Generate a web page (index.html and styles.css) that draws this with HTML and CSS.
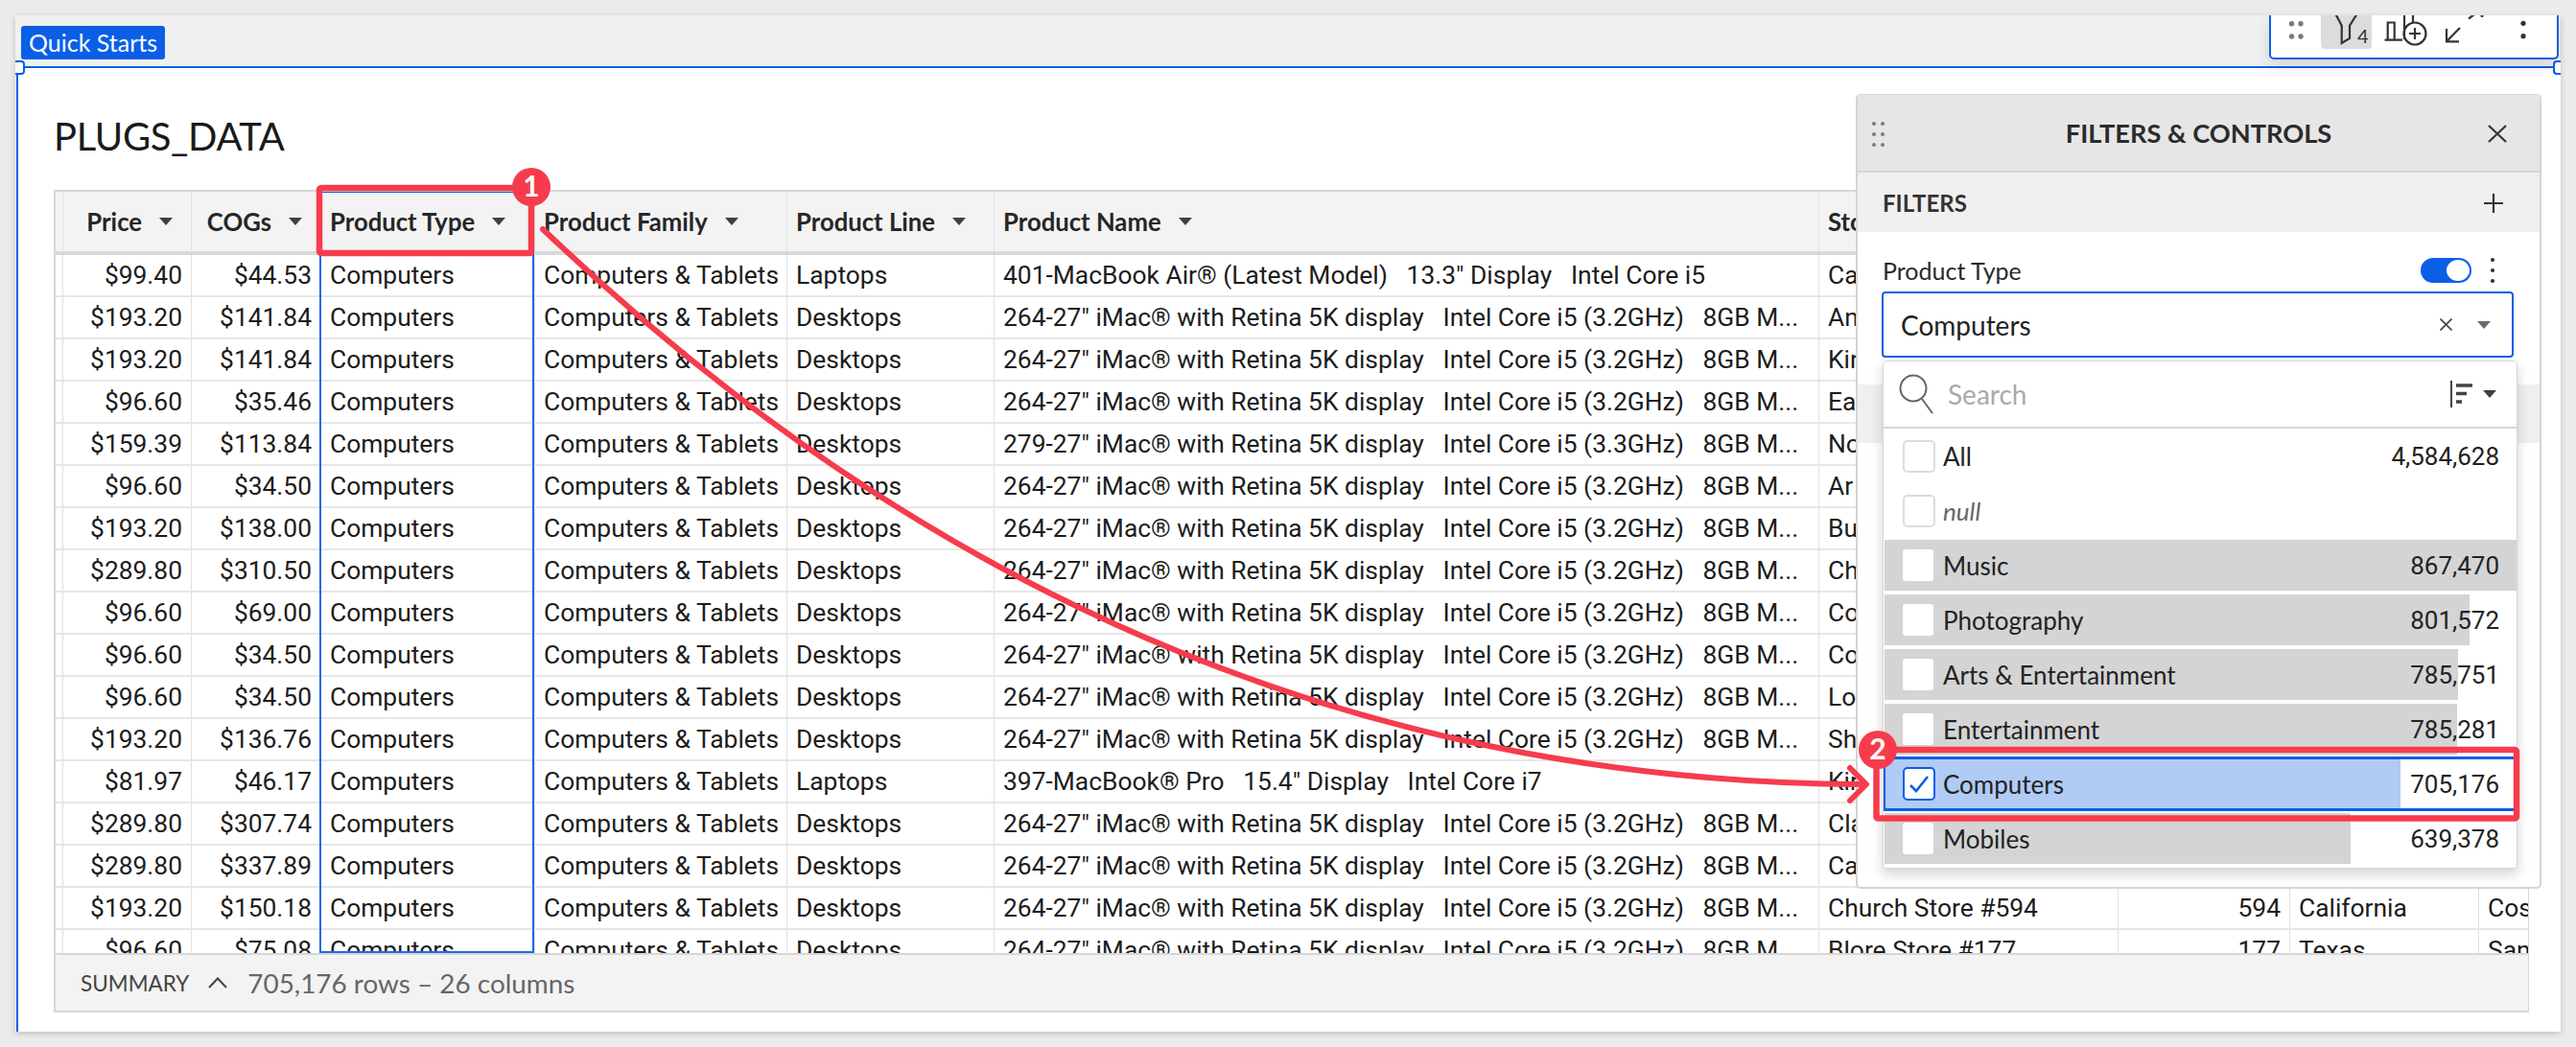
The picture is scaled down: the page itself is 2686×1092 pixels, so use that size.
FILE: index.html
```html
<!DOCTYPE html>
<html lang="en">
<head>
<meta charset="utf-8">
<title>PLUGS_DATA</title>
<link rel="stylesheet" href="styles.css">
</head>
<body>
<div class="sheet">
  <div class="topbar"><button class="qs">Quick Starts</button></div>
  <main class="element">
    <h1 class="title">PLUGS_DATA</h1>
    <section class="table">
      <div class="grid">
        <div class="row head">
          <div class="c"></div>
          <div class="c r">Price<i class="caret"></i></div>
          <div class="c r">COGs<i class="caret"></i></div>
          <div class="c">Product Type<i class="caret"></i></div>
          <div class="c">Product Family<i class="caret"></i></div>
          <div class="c">Product Line<i class="caret"></i></div>
          <div class="c">Product Name<i class="caret"></i></div>
          <div class="c">Store Name</div><div class="c"></div><div class="c"></div><div class="c"></div>
        </div>
        <div class="row"><div class="c"></div><div class="c r">$99.40</div><div class="c r">$44.53</div><div class="c">Computers</div><div class="c">Computers &amp; Tablets</div><div class="c">Laptops</div><div class="c">401-MacBook Air® (Latest Model)   13.3" Display   Intel Core i5</div><div class="c">Car</div><div class="c"></div><div class="c"></div><div class="c"></div></div>
        <div class="row"><div class="c"></div><div class="c r">$193.20</div><div class="c r">$141.84</div><div class="c">Computers</div><div class="c">Computers &amp; Tablets</div><div class="c">Desktops</div><div class="c">264-27" iMac® with Retina 5K display   Intel Core i5 (3.2GHz)   8GB M...</div><div class="c">And</div><div class="c"></div><div class="c"></div><div class="c"></div></div>
        <div class="row"><div class="c"></div><div class="c r">$193.20</div><div class="c r">$141.84</div><div class="c">Computers</div><div class="c">Computers &amp; Tablets</div><div class="c">Desktops</div><div class="c">264-27" iMac® with Retina 5K display   Intel Core i5 (3.2GHz)   8GB M...</div><div class="c">Kir</div><div class="c"></div><div class="c"></div><div class="c"></div></div>
        <div class="row"><div class="c"></div><div class="c r">$96.60</div><div class="c r">$35.46</div><div class="c">Computers</div><div class="c">Computers &amp; Tablets</div><div class="c">Desktops</div><div class="c">264-27" iMac® with Retina 5K display   Intel Core i5 (3.2GHz)   8GB M...</div><div class="c">Ear</div><div class="c"></div><div class="c"></div><div class="c"></div></div>
        <div class="row"><div class="c"></div><div class="c r">$159.39</div><div class="c r">$113.84</div><div class="c">Computers</div><div class="c">Computers &amp; Tablets</div><div class="c">Desktops</div><div class="c">279-27" iMac® with Retina 5K display   Intel Core i5 (3.3GHz)   8GB M...</div><div class="c">Nor</div><div class="c"></div><div class="c"></div><div class="c"></div></div>
        <div class="row"><div class="c"></div><div class="c r">$96.60</div><div class="c r">$34.50</div><div class="c">Computers</div><div class="c">Computers &amp; Tablets</div><div class="c">Desktops</div><div class="c">264-27" iMac® with Retina 5K display   Intel Core i5 (3.2GHz)   8GB M...</div><div class="c">Ar</div><div class="c"></div><div class="c"></div><div class="c"></div></div>
        <div class="row"><div class="c"></div><div class="c r">$193.20</div><div class="c r">$138.00</div><div class="c">Computers</div><div class="c">Computers &amp; Tablets</div><div class="c">Desktops</div><div class="c">264-27" iMac® with Retina 5K display   Intel Core i5 (3.2GHz)   8GB M...</div><div class="c">Bu</div><div class="c"></div><div class="c"></div><div class="c"></div></div>
        <div class="row"><div class="c"></div><div class="c r">$289.80</div><div class="c r">$310.50</div><div class="c">Computers</div><div class="c">Computers &amp; Tablets</div><div class="c">Desktops</div><div class="c">264-27" iMac® with Retina 5K display   Intel Core i5 (3.2GHz)   8GB M...</div><div class="c">Ch</div><div class="c"></div><div class="c"></div><div class="c"></div></div>
        <div class="row"><div class="c"></div><div class="c r">$96.60</div><div class="c r">$69.00</div><div class="c">Computers</div><div class="c">Computers &amp; Tablets</div><div class="c">Desktops</div><div class="c">264-27" iMac® with Retina 5K display   Intel Core i5 (3.2GHz)   8GB M...</div><div class="c">Co</div><div class="c"></div><div class="c"></div><div class="c"></div></div>
        <div class="row"><div class="c"></div><div class="c r">$96.60</div><div class="c r">$34.50</div><div class="c">Computers</div><div class="c">Computers &amp; Tablets</div><div class="c">Desktops</div><div class="c">264-27" iMac® with Retina 5K display   Intel Core i5 (3.2GHz)   8GB M...</div><div class="c">Co</div><div class="c"></div><div class="c"></div><div class="c"></div></div>
        <div class="row"><div class="c"></div><div class="c r">$96.60</div><div class="c r">$34.50</div><div class="c">Computers</div><div class="c">Computers &amp; Tablets</div><div class="c">Desktops</div><div class="c">264-27" iMac® with Retina 5K display   Intel Core i5 (3.2GHz)   8GB M...</div><div class="c">Lo</div><div class="c"></div><div class="c"></div><div class="c"></div></div>
        <div class="row"><div class="c"></div><div class="c r">$193.20</div><div class="c r">$136.76</div><div class="c">Computers</div><div class="c">Computers &amp; Tablets</div><div class="c">Desktops</div><div class="c">264-27" iMac® with Retina 5K display   Intel Core i5 (3.2GHz)   8GB M...</div><div class="c">Sh</div><div class="c"></div><div class="c"></div><div class="c"></div></div>
        <div class="row"><div class="c"></div><div class="c r">$81.97</div><div class="c r">$46.17</div><div class="c">Computers</div><div class="c">Computers &amp; Tablets</div><div class="c">Laptops</div><div class="c">397-MacBook® Pro   15.4" Display   Intel Core i7</div><div class="c">Kir</div><div class="c"></div><div class="c"></div><div class="c"></div></div>
        <div class="row"><div class="c"></div><div class="c r">$289.80</div><div class="c r">$307.74</div><div class="c">Computers</div><div class="c">Computers &amp; Tablets</div><div class="c">Desktops</div><div class="c">264-27" iMac® with Retina 5K display   Intel Core i5 (3.2GHz)   8GB M...</div><div class="c">Cla</div><div class="c"></div><div class="c"></div><div class="c"></div></div>
        <div class="row"><div class="c"></div><div class="c r">$289.80</div><div class="c r">$337.89</div><div class="c">Computers</div><div class="c">Computers &amp; Tablets</div><div class="c">Desktops</div><div class="c">264-27" iMac® with Retina 5K display   Intel Core i5 (3.2GHz)   8GB M...</div><div class="c">Car</div><div class="c"></div><div class="c"></div><div class="c"></div></div>
        <div class="row"><div class="c"></div><div class="c r">$193.20</div><div class="c r">$150.18</div><div class="c">Computers</div><div class="c">Computers &amp; Tablets</div><div class="c">Desktops</div><div class="c">264-27" iMac® with Retina 5K display   Intel Core i5 (3.2GHz)   8GB M...</div><div class="c">Church Store #594</div><div class="c r">594</div><div class="c">California</div><div class="c">Cos</div></div>
        <div class="row"><div class="c"></div><div class="c r">$96.60</div><div class="c r">$75.08</div><div class="c">Computers</div><div class="c">Computers &amp; Tablets</div><div class="c">Desktops</div><div class="c">264-27" iMac® with Retina 5K display   Intel Core i5 (3.2GHz)   8GB M...</div><div class="c">Blore Store #177</div><div class="c r">177</div><div class="c">Texas</div><div class="c">San</div></div>
        <div class="colsel"></div>
      </div>
      <footer class="summary">
        <span class="sumlabel">SUMMARY</span>
        <svg class="chev" width="20" height="12" viewBox="0 0 20 12"><path d="M1 11 10 1.5 19 11"/></svg>
        <span class="sumcount">705,176 rows – 26 columns</span>
      </footer>
    </section>
  </main>

  <i class="handle hl"></i>
  <i class="handle hr"></i>

  <nav class="tools">
    <span class="tool t-grip"><svg width="52" height="35" viewBox="2368 16 52 35"><g class="fill-grey"><circle cx="2389.5" cy="24.7" r="2.7"/><circle cx="2399" cy="24.7" r="2.7"/><circle cx="2389.5" cy="38" r="2.7"/><circle cx="2399" cy="38" r="2.7"/></g></svg></span>
    <span class="tool t-filter"><svg width="53" height="35" viewBox="2420 16 53 35"><path class="line" d="M2435 14 2441.7 26.7V45L2450 40V26.7L2458 14"/><text x="2458" y="45" class="cnt">4</text></svg></span>
    <span class="tool t-chart"><svg width="70" height="35" viewBox="2473 16 70 35"><path class="line" d="M2486.5 41.7H2505M2489.7 41.7V23.5H2496.7V41.7M2507 41V14M2516 24V14"/><circle class="line ring" cx="2518" cy="35" r="11.5"/><path class="line" d="M2518 29V41M2512 35H2524"/></svg></span>
    <span class="tool t-shrink"><svg width="67" height="35" viewBox="2543 16 67 35"><path class="line" d="M2565 29 2551 43.3M2551 30V43.3H2564M2574 19.5 2580 15"/><circle class="fill-dark" cx="2588" cy="16.5" r="1.6"/></svg></span>
    <span class="tool t-more"><svg width="40" height="35" viewBox="2610 16 40 35"><circle class="fill-dark" cx="2631" cy="24.3" r="2.6"/><circle class="fill-dark" cx="2631" cy="37.7" r="2.6"/></svg></span>
  </nav>

  <aside class="panel">
    <header class="p-head">
      <svg class="p-grip" width="13" height="30" viewBox="0 0 13 30"><g class="fill-grey"><circle cx="2" cy="3" r="2"/><circle cx="11" cy="3" r="2"/><circle cx="2" cy="14" r="2"/><circle cx="11" cy="14" r="2"/><circle cx="2" cy="25" r="2"/><circle cx="11" cy="25" r="2"/></g></svg>
      <h2 class="p-title">FILTERS &amp; CONTROLS</h2>
      <svg class="p-close" width="20" height="19" viewBox="0 0 20 19"><path class="line" d="M1 1 19 18M19 1 1 18"/></svg>
    </header>
    <div class="p-sub">
      <span>FILTERS</span>
      <svg width="20" height="20" viewBox="0 0 20 20"><path class="line" d="M10 0V20M0 10H20"/></svg>
    </div>
    <div class="p-label">
      <span class="p-name">Product Type</span>
      <span class="toggle"><i class="knob"></i></span>
      <svg class="p-kebab" width="6" height="28" viewBox="0 0 6 28"><circle class="fill-dark" cx="3" cy="3" r="2.1"/><circle class="fill-dark" cx="3" cy="14" r="2.1"/><circle class="fill-dark" cx="3" cy="25" r="2.1"/></svg>
    </div>
    <div class="input">
      <span class="input-v">Computers</span>
      <svg width="13" height="13" viewBox="0 0 13 13"><path class="line thin" d="M.5.5 12.5 12.5M12.5.5.5 12.5"/></svg>
      <i class="caret grey"></i>
    </div>
    <div class="band"></div>

    <div class="drop">
      <div class="d-search">
        <svg width="40" height="44" viewBox="0 0 40 44"><circle class="line thinish" cx="16" cy="16" r="13.5"/><path class="line thinish" d="M25 27 36 42"/></svg>
        <span class="d-ph">Search</span>
        <svg width="24" height="30" viewBox="0 0 24 30"><path class="line mid" d="M1 1V29"/><path class="line thick" d="M6 6H23M6 14.5H17M6 23H12"/></svg>
        <i class="caret"></i>
      </div>
      <ul class="opts">
        <li class="opt"><i class="cb empty"></i><span class="o-name">All</span><span class="o-n">4,584,628</span></li>
        <li class="opt"><i class="cb empty"></i><span class="o-name null">null</span></li>
        <li class="opt"><i class="bar" style="width:100%"></i><i class="cb"></i><span class="o-name">Music</span><span class="o-n">867,470</span></li>
        <li class="opt"><i class="bar" style="width:92.4%"></i><i class="cb"></i><span class="o-name">Photography</span><span class="o-n">801,572</span></li>
        <li class="opt"><i class="bar" style="width:90.6%"></i><i class="cb"></i><span class="o-name">Arts &amp; Entertainment</span><span class="o-n">785,751</span></li>
        <li class="opt"><i class="bar" style="width:90.5%"></i><i class="cb"></i><span class="o-name">Entertainment</span><span class="o-n">785,281</span></li>
        <li class="opt sel"><i class="bar" style="width:81.3%"></i><i class="cb on"><svg width="22" height="20" viewBox="0 0 22 20"><path d="M2 11 8 17 20 2"/></svg></i><span class="o-name">Computers</span><span class="o-n">705,176</span></li>
        <li class="opt"><i class="bar" style="width:73.7%"></i><i class="cb"></i><span class="o-name">Mobiles</span><span class="o-n">639,378</span></li>
      </ul>
    </div>
  </aside>
</div>

<svg class="notes" width="2686" height="1092" viewBox="0 0 2686 1092">
  <rect class="n-box" x="333" y="196" width="221" height="68" rx="2"/>
  <rect class="n-box" x="1956.5" y="782" width="667.5" height="71.5" rx="2"/>
  <path class="n-arrow" d="M566 239C860 520 1300 815 1942 818"/>
  <path class="n-arrow" d="M1929 801 1946 818 1929 835"/>
  <circle class="n-dot" cx="554" cy="195" r="20"/>
  <text class="n-num" x="554" y="205">1</text>
  <circle class="n-dot" cx="1958" cy="782" r="20"/>
  <text class="n-num" x="1958" y="792">2</text>
</svg>
</body>
</html>
```
FILE: styles.css
```css
* { box-sizing: border-box; }
html, body { margin: 0; padding: 0; }
body {
  width: 2686px;
  height: 1092px;
  overflow: hidden;
  position: relative;
  background: #ebebeb;
  font-family: "Lato", "Noto Sans", sans-serif;
  color: #1c1c1c;
}
.sheet {
  position: absolute;
  left: 16px;
  top: 16px;
  width: 2654px;
  height: 1060px;
  display: flex;
  flex-direction: column;
  overflow: hidden;
  background: #f0f0f0;
  box-shadow: 0 2px 6px rgba(0,0,0,.18);
}
.topbar { height: 53px; padding: 11px 0 0 6px; flex: none; }
.qs {
  display: block;
  width: 150px;
  height: 35px;
  padding: 0;
  border: 0;
  border-radius: 3px;
  background: #0b5fe6;
  color: #fff;
  font: 400 25px/35px "Lato", sans-serif;
}
.element {
  flex: 1;
  min-height: 0;
  display: flex;
  flex-direction: column;
  margin-left: 1px;
  padding: 0 33px 20px 37px;
  background: #fff;
  border-top: 2px solid #0b5fe6;
  border-left: 2px solid #0b5fe6;
}
.title {
  flex: none;
  height: 127px;
  margin: 0;
  padding-top: 46px;
  font: 400 40px/50px "Lato", sans-serif;
  letter-spacing: -.35px;
  color: #1a1a1a;
}
.table {
  flex: 1;
  min-height: 0;
  display: flex;
  flex-direction: column;
  border: 2px solid #d6d6d6;
  border-right-width: 1px;
}
.grid { flex: 1; min-height: 0; overflow: hidden; position: relative; }
.row {
  display: grid;
  grid-template-columns: 8px 134px 135px 223px 263px 216px 860px 312px 179px 197px 52px;
  height: 44px;
  border-bottom: 2px solid #e6e6e6;
  font: 400 26.4px/42px "Roboto", sans-serif;
  white-space: pre;
}
.row.head {
  height: 66px;
  background: #f3f3f3;
  border-bottom: 4px solid #d9d9d9;
  font: 700 25.7px/60px "Lato", sans-serif;
  color: #262626;
}
.row.head .c { display: flex; align-items: center; }
.row.head .r { justify-content: flex-end; padding-right: 19px; }
.c {
  overflow: hidden;
  padding: 0 9px;
  border-right: 1px solid #e0e0e0;
}
.c:first-child { padding: 0; }
.c:last-child { border-right: 0; }
.c.r { text-align: right; }
.caret {
  display: inline-block;
  flex: none;
  width: 0;
  height: 0;
  margin-left: 18px;
  border-style: solid;
  border-width: 8px 7.5px 0;
  border-color: #3f3f3f transparent transparent;
}
.caret.grey { border-color: #6b6b6b transparent transparent; margin-left: 26px; }
.colsel {
  position: absolute;
  left: 275px;
  top: -1px;
  width: 224px;
  height: 795px;
  border: 2px solid #1e6ae8;
  border-top-color: #0b5fe6;
  pointer-events: none;
}
.summary {
  flex: none;
  height: 60px;
  display: flex;
  align-items: center;
  padding-left: 26px;
  background: #f3f3f3;
  border-top: 2px solid #d6d6d6;
}
.sumlabel { font-size: 22.5px; color: #444; }
.chev { margin-left: 20px; fill: none; stroke: #444; stroke-width: 2; }
.sumcount { margin-left: 21px; font-size: 27.9px; color: #666; }

.handle {
  position: absolute;
  top: 47px;
  width: 10px;
  height: 15px;
  background: #fff;
  border: 2px solid #0b5fe6;
}
.hl { left: 0; border-left: 0; border-radius: 0 4px 4px 0; }
.hr { right: 0; width: 8px; border-right: 0; border-radius: 4px 0 0 4px; }

.tools {
  position: absolute;
  left: 2350px;
  top: 0;
  width: 302px;
  height: 46px;
  display: flex;
  align-items: flex-start;
  background: #fff;
  border: 2px solid #0b5fe6;
  border-top: 0;
  border-radius: 0 0 5px 5px;
  box-shadow: 0 6px 16px rgba(0,0,0,.12);
}
.tool { display: block; height: 35px; flex: none; }
.tool svg { display: block; }
.t-filter { background: #dcdcdc; border-radius: 0 0 4px 4px; }
.line { fill: none; stroke: #333; stroke-width: 2.2; }
.line.thin { stroke-width: 1.6; stroke: #444; }
.line.thinish { stroke-width: 2; stroke: #666; }
.line.mid { stroke-width: 2; stroke: #444; }
.line.thick { stroke-width: 3.6; stroke: #444; }
.fill-grey { fill: #7a7a7a; }
.fill-dark { fill: #333; }
.cnt { font: 400 20px "Lato", sans-serif; fill: #333; }

.panel {
  position: absolute;
  left: 1919px;
  top: 82px;
  width: 715px;
  height: 829px;
  background: #fff;
  border: 2px solid #d4d4d4;
  border-top-width: 1px;
  border-radius: 5px;
}
.p-head {
  height: 81px;
  position: relative;
  display: flex;
  align-items: center;
  justify-content: center;
  background: #e6e6e6;
  border-bottom: 2px solid #d6d6d6;
  border-radius: 4px 4px 0 0;
}
.p-grip { position: absolute; left: 15px; top: 27px; }
.p-title { margin: 0; font: 700 27.2px/1 "Lato", sans-serif; color: #2b2b2b; }
.p-close { position: absolute; right: 34px; top: 31px; }
.p-sub {
  height: 62px;
  display: flex;
  align-items: center;
  justify-content: space-between;
  padding: 2px 38px 0 26px;
  background: #f0f0f0;
  font: 700 24px/1 "Lato", sans-serif;
  color: #333;
}
.p-label {
  height: 62px;
  display: flex;
  align-items: center;
  padding: 18px 46px 0 26px;
}
.p-name { flex: 1; font-size: 25px; color: #2a2a2a; }
.toggle {
  display: block;
  width: 53px;
  height: 26px;
  padding: 2px;
  border-radius: 13px;
  background: #0b5fe6;
}
.knob {
  display: block;
  width: 24px;
  height: 22px;
  margin-left: 25px;
  border-radius: 50%;
  background: #fff;
}
.p-kebab { margin-left: 19px; }
.input {
  width: 659px;
  height: 69px;
  margin-left: 25px;
  display: flex;
  align-items: center;
  padding: 0 22px 0 18px;
  border: 2px solid #0b5fe6;
  border-radius: 4px;
}
.input-v { flex: 1; font-size: 28px; color: #222; }
.band { height: 61px; margin-top: 28px; background: #f0f0f0; }

.drop {
  position: absolute;
  left: 26px;
  top: 277px;
  width: 662px;
  height: 530px;
  background: #fff;
  border: 1px solid #d6d6d6;
  border-radius: 4px;
  box-shadow: 0 6px 14px rgba(0,0,0,.18);
}
.d-search {
  height: 70px;
  display: flex;
  align-items: center;
  padding: 0 21px 0 15px;
  border-bottom: 2px solid #d6d6d6;
}
.d-ph { flex: 1; margin-left: 12px; font-size: 28px; color: #aaa; }
.d-search .caret { margin-left: 10px; }
.opts { list-style: none; margin: 0; padding: 0; }
.opt {
  position: relative;
  height: 57px;
  display: flex;
  align-items: center;
  padding-left: 20px;
  padding-right: 18px;
  font: 400 26px/1 "Lato", sans-serif;
  color: #222;
}
.bar {
  position: absolute;
  left: 1px;
  top: 2px;
  bottom: 2px;
  background: #d4d4d4;
}
.cb {
  position: relative;
  flex: none;
  width: 32px;
  height: 33px;
  margin-right: 10px;
  background: #fff;
  border-radius: 3px;
}
.cb.empty { width: 34px; height: 34px; border: 2px solid #dcdcdc; margin-right: 8px; border-radius: 5px; }
.cb.on {
  width: 34px;
  height: 35px;
  margin-right: 8px;
  border: 2px solid #0b5fe6;
  border-radius: 5px;
  display: flex;
  align-items: center;
  justify-content: center;
}
.cb.on path { fill: none; stroke: #0b5fe6; stroke-width: 2.6; }
.o-name { position: relative; flex: 1; }
.o-name.null { font-style: italic; color: #666; }
.o-n { position: relative; font-family: "Roboto", sans-serif; }
.sel { box-shadow: inset 0 3px 0 #0b5fe6, inset 0 -3px 0 #0b5fe6, inset 2px 0 0 #0b5fe6; }
.sel .bar { background: #b0cbf4; top: 3px; bottom: 3px; left: 2px; }

.notes { position: absolute; left: 0; top: 0; pointer-events: none; }
.n-box { fill: none; stroke: #f63c4c; stroke-width: 6.5; }
.n-arrow { fill: none; stroke: #f63c4c; stroke-width: 6; stroke-linecap: round; stroke-linejoin: round; }
.n-dot { fill: #f63c4c; }
.n-num { font: 700 30px "Lato", sans-serif; fill: #fff; text-anchor: middle; }
```
